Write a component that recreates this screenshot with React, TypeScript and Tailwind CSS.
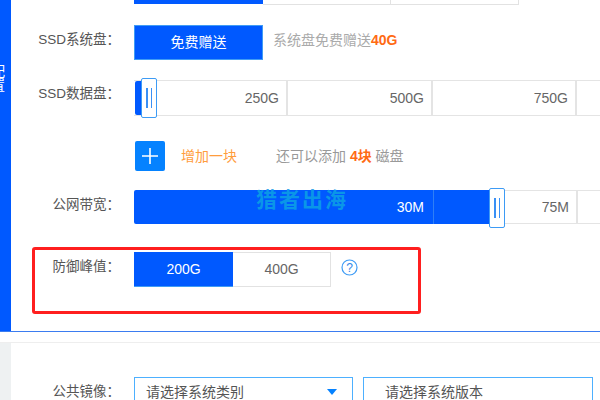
const cjk = "font-['Liberation_Sans','Noto_Sans_CJK_SC',sans-serif]";

function Thumb({ className }: { className: string }) {
  return (
    <div className={`absolute flex h-[40px] w-[16px] justify-center gap-[3px] rounded-[2px] border border-[#3d9bf5] bg-white pt-[9px] ${className}`}>
      <span className="h-[20px] w-[1.5px] bg-[#3a90f5]" />
      <span className="h-[20px] w-[1.5px] bg-[#3a90f5]" />
    </div>
  );
}

function Label({ children }: { children: string }) {
  return <div className="w-[134px] shrink-0 pr-[25px] text-right text-[13.5px] leading-[20px] text-[#555]">{children}</div>;
}

function Cell({ w, text }: { w: string; text: string }) {
  return <div className={`flex ${w} items-center justify-end border-r-2 border-[#e4e4e4] pr-[7px]`}>{text}</div>;
}

export default function App() {
  return (
    <div className={`relative h-[400px] w-[600px] overflow-hidden bg-white ${cjk}`}>
      {/* first card */}
      <div className="flex h-[332px] border-b border-[#3b7cf0] bg-white">
        <div className="relative w-[11px] shrink-0 overflow-hidden bg-[#0059ff]">
          <span className="absolute left-[-9px] top-[64px] w-[14px] text-[14px] leading-[14px] text-white">配置</span>
        </div>
        <div className="flex-1">
          {/* top row, cut by the window */}
          <div className="flex h-[5px] pl-[123px]">
            <div className="h-[4px] w-[129px] bg-[#0059ff]" />
            <div className="h-[5px] w-[128px] border-b border-r border-[#e2e2e2]" />
            <div className="h-[5px] w-[128px] border-b border-r border-[#e2e2e2]" />
          </div>

          <div className="mt-[20px] flex items-start">
            <div className="pt-[5px]"><Label>SSD系统盘：</Label></div>
            <div className="ml-[-11px] flex h-[35px] w-[129px] items-center justify-center border border-[#3f9cf5] bg-[#0059ff] text-[14px] text-white">免费赠送</div>
            <div className="ml-[10px] flex h-[31px] items-center text-[14px] text-[#aaa]">
              系统盘免费赠送<span className="font-bold text-[#ff6a13]">40G</span>
            </div>
          </div>

          <div className="mt-[20px] flex items-start">
            <div className="pt-[4px]"><Label>SSD数据盘：</Label></div>
            <div className="relative ml-[-11px] flex h-[36px] border-y border-[#e4e4e4] text-[14px] text-[#666]">
              <div className="absolute left-[1px] top-0 h-[34px] w-[12px] rounded-l-[2px] bg-[#0059ff]" />
              <Thumb className="left-[7px] top-[-3px]" />
              <Cell w="w-[154px]" text="250G" />
              <Cell w="w-[145px]" text="500G" />
              <Cell w="w-[144px]" text="750G" />
              <div className="w-[50px]" />
            </div>
          </div>

          <div className="mt-[25px] flex items-center">
            <div className="ml-[124px] flex h-[30px] w-[30px] items-center justify-center rounded-[2px] bg-[#0582ff]">
              <svg width="16" height="16" viewBox="0 0 16 16" className="text-white">
                <path d="M8 0v16M0 8h16" stroke="currentColor" strokeWidth="1.6" />
              </svg>
            </div>
            <span className="ml-[16px] text-[14px] text-[#ff9d3d]">增加一块</span>
            <span className="ml-[39px] text-[14px] text-[#999]">
              还可以添加 <span className="font-bold text-[#ff6a13]">4块</span> 磁盘
            </span>
          </div>

          <div className="mt-[19px] flex items-start">
            <div className="pt-[5px]"><Label>公网带宽：</Label></div>
            <div className="relative ml-[-11px] flex h-[34px] text-[14px] text-[#666]">
              <div className="flex h-[34px] w-[356px] items-center justify-end rounded-l-[2px] bg-[#0059ff] text-white">
                <span className="mr-[9px]">30M</span>
                <div className="h-full w-px bg-[#2f7ff5]" />
                <div className="w-[56px]" />
              </div>
              <Thumb className="left-[355px] top-[-2px]" />
              <div className="flex w-[88px] items-center justify-end border-y border-r-2 border-[#e4e4e4] pr-[7px]">75M</div>
              <div className="w-[50px] border-y border-[#e4e4e4]" />
            </div>
          </div>

          <div className="mt-[28px] flex items-start">
            <div className="pt-[5px]"><Label>防御峰值：</Label></div>
            <div className="ml-[-11px] flex h-[35px] w-[99px] items-center justify-center border-b border-[#3f9cf5] bg-[#0059ff] text-[14px] text-white">200G</div>
            <div className="flex h-[35px] w-[98px] items-center justify-center border border-l-0 border-[#e2e2e2] text-[14px] text-[#666]">400G</div>
            <svg width="17" height="17" viewBox="0 0 17 17" className="ml-[10px] mt-[7px]">
              <circle cx="8.5" cy="8.5" r="7.5" fill="none" stroke="#3f9cf5" strokeWidth="1.2" />
              <text x="8.5" y="12.6" textAnchor="middle" fontSize="12" fill="#2f86e8">?</text>
            </svg>
          </div>
        </div>
      </div>

      {/* second card */}
      <div className="mt-[10px] flex h-[58px] border-t border-[#eeeeee]">
        <div className="w-[11px] shrink-0 bg-[#eef1f2]" />
        <div className="flex flex-1 items-start pt-[34px]">
          <div className="pt-[5px]"><Label>公共镜像：</Label></div>
          <div className="ml-[-11px] flex h-[40px] w-[219px] items-start justify-between border border-[#4db0ff] pl-[11px] pr-[15px] pt-[4px] text-[14px] text-[#555]">
            请选择系统类别
            <span className="mt-[7px] h-0 w-0 border-x-[5px] border-t-[6px] border-x-transparent border-t-[#0582ff]" />
          </div>
          <div className="ml-[10px] h-[40px] w-[230px] border border-[#4db0ff] pl-[21px] pt-[4px] text-[14px] text-[#555]">请选择系统版本</div>
        </div>
      </div>

      {/* annotation on the screenshot */}
      <div className="absolute left-[32px] top-[247px] h-[67px] w-[389px] rounded-[3px] border-[3px] border-[#ff1f1f]" />
      <span className="absolute left-[256px] top-[187px] text-[21px] font-bold leading-[26px] tracking-[2px] text-[#0a96e8]">猎者出海</span>
    </div>
  );
}
